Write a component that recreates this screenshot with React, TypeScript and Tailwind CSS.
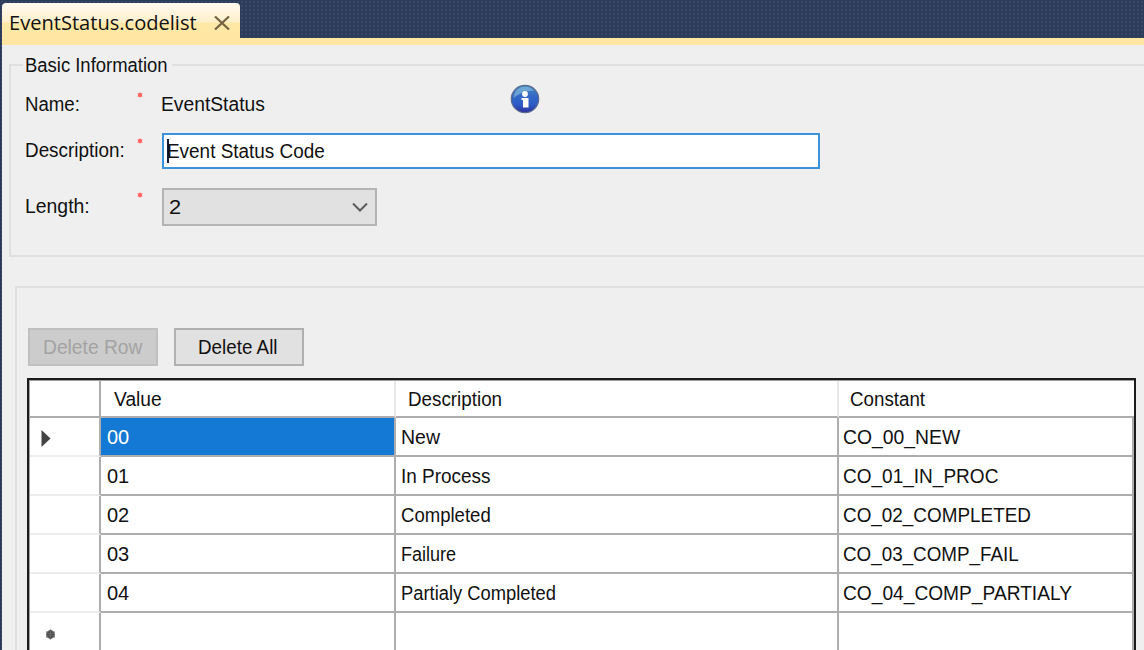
import { useLayoutEffect, useRef, useState } from "react";

type FitProps = { children: string; w: number; className?: string };

/* Single-line text condensed horizontally to a given advance width. */
function Fit({ children, w, className = "" }: FitProps) {
  const ref = useRef<HTMLSpanElement>(null);
  const [scale, setScale] = useState(1);
  useLayoutEffect(() => {
    if (ref.current) setScale(w / ref.current.offsetWidth);
  }, [w, children]);
  return (
    <span className={`block h-6 shrink-0 ${className}`} style={{ width: w }}>
      <span
        ref={ref}
        className="block w-max origin-left whitespace-nowrap leading-6"
        style={{ transform: `scaleX(${scale})` }}
      >
        {children}
      </span>
    </span>
  );
}

function Required() {
  return (
    <svg viewBox="0 0 6 6" className="h-1.5 w-1.5" fill="#ff4a4a">
      <circle cx="3" cy="3" r="2.1" />
      <path d="M3 0.300v5.400M0.500 1.500l5 3M0.500 4.500l5-3" stroke="#ff6b6b" strokeWidth="0.8" />
    </svg>
  );
}

function InfoIcon() {
  return (
    <svg viewBox="0 0 30 30" className="h-[30px] w-[30px]">
      <defs>
        <linearGradient id="ball" x1="0" y1="0" x2="0" y2="1">
          <stop offset="0" stopColor="#4b8fc4" />
          <stop offset="0.4" stopColor="#3467c6" />
          <stop offset="0.7" stopColor="#2d5cc6" />
          <stop offset="1" stopColor="#2b2f9a" />
        </linearGradient>
      </defs>
      <circle cx="15" cy="15" r="13.7" fill="url(#ball)" stroke="#5c6c8e" strokeWidth="1.2" />
      <path d="M3.500 14C4 7 9 2.800 15 2.800c4 0 7 1.500 9 4.200C17 6 10 9 3.500 14z" fill="#8bbfdc" opacity="0.6" />
      <circle cx="15" cy="10" r="2.900" fill="#fff" />
      <path d="M11.500 14h7v9.500h-5.500v-7.500h-1.500z" fill="#fff" />
    </svg>
  );
}

const rows = [
  { value: "00", desc: "New", dw: 39, constant: "CO_00_NEW", cw: 117 },
  { value: "01", desc: "In Process", dw: 89, constant: "CO_01_IN_PROC", cw: 155 },
  { value: "02", desc: "Completed", dw: 90, constant: "CO_02_COMPLETED", cw: 188 },
  { value: "03", desc: "Failure", dw: 55, constant: "CO_03_COMP_FAIL", cw: 176 },
  { value: "04", desc: "Partialy Completed", dw: 155, constant: "CO_04_COMP_PARTIALY", cw: 229 },
];

const grid = "grid grid-cols-[71px_295px_443px_295px]";
const cell = "flex items-center border-r-2 border-b-2 border-[#adadad]";

export default function App() {
  return (
    <div className="flex h-[650px] w-[1144px] flex-col overflow-hidden bg-[#2b3b58] bg-[radial-gradient(#35496a_0.8px,transparent_1px)] bg-[size:4px_4px] pl-0.5 font-['Liberation_Sans',Arial,sans-serif] text-[20px] text-[#111]">
      <div className="flex h-[38px] shrink-0 items-end">
        <div className="flex h-[35px] w-[238px] items-center rounded-t-[4px] bg-[linear-gradient(#fffaf0_0,#fff0cb_19px,#ffe8a6_20px,#ffe6a3_100%)] pl-[7px] font-['Open_Sans','Noto_Sans',sans-serif] text-[20.5px]">
          <Fit w={188} className="mt-0.5">EventStatus.codelist</Fit>
          <svg viewBox="0 0 16 14" className="ml-[17px] mt-1 h-3.5 w-4" fill="none" stroke="#746340" strokeWidth="2.2">
            <path d="M1 0.500L15 13.500M15 0.500L1 13.500" />
          </svg>
        </div>
      </div>
      <div className="h-[7px] shrink-0 bg-[#ffe6a3]" />

      <main className="flex flex-1 flex-col overflow-hidden bg-[#efefef]">
        <fieldset className="ml-[7px] mt-2 h-[204px] shrink-0 border-2 border-r-0 border-[#dfdfdf]">
          <legend className="ml-3 h-6 pl-0.5 pr-1">
            <Fit w={143}>Basic Information</Fit>
          </legend>
          <div className="flex h-9 pl-3.5">
            <div className="w-[112px] pt-[15px]"><Fit w={55}>Name:</Fit></div>
            <div className="w-[24px] pt-[15px]"><Required /></div>
            <div className="w-[349px] pt-[15px]"><Fit w={104}>EventStatus</Fit></div>
            <div className="pt-[7px]"><InfoIcon /></div>
          </div>
          <div className="mt-5 flex h-9 pl-3.5">
            <div className="w-[112px] pt-[5px]"><Fit w={100}>Description:</Fit></div>
            <div className="w-[25px] pt-[5px]"><Required /></div>
            <div className="flex h-9 w-[658px] items-center border-2 border-[#3c93dc] bg-white pl-[3px]">
              <span className="h-6 w-0.5 bg-[#111a3a]" />
              <Fit w={158} className="-ml-0.5">Event Status Code</Fit>
            </div>
          </div>
          <div className="mt-[19px] flex h-[38px] pl-3.5">
            <div className="w-[112px] pt-[6px]"><Fit w={65}>Length:</Fit></div>
            <div className="w-[25px] pt-1"><Required /></div>
            <div className="flex h-[38px] w-[215px] items-center justify-between border-2 border-[#b4b4b4] bg-[#e1e1e1] pl-[5px] pr-[7px]">
              <Fit w={12}>2</Fit>
              <svg viewBox="0 0 16 10" className="h-2.5 w-4" fill="none" stroke="#5c5c5c" strokeWidth="2">
                <path d="M1 1.500L8 8.500L15 1.500" />
              </svg>
            </div>
          </div>
        </fieldset>

        <section className="ml-[13px] mt-[29px] flex-1 border-l-2 border-t-2 border-[#dfdfdf]">
          <div className="ml-[11px] mt-10 flex gap-4">
            <button className="flex h-[38px] w-[130px] items-center justify-center border-2 border-[#c0c0c0] bg-[#cccccc] pr-0.5 text-[#a3a3a3]">
              <Fit w={99}>Delete Row</Fit>
            </button>
            <button className="flex h-[38px] w-[130px] items-center justify-center border-2 border-[#b0b0b0] bg-[#e1e1e1] pr-[3px]">
              <Fit w={80}>Delete All</Fit>
            </button>
          </div>

          <div className="ml-2.5 mt-3 w-[1109px] border-2 border-[#1c1c1c] bg-white">
            <div className="border-l border-t border-[#a0a0a0]">
              <div className={`${grid} h-[37px]`}>
                <div className={cell} />
                <div className="flex items-center border-b-2 border-r-2 border-b-[#adadad] border-r-[#e8e8e8] pl-[13px]"><Fit w={48}>Value</Fit></div>
                <div className="flex items-center border-b-2 border-r-2 border-b-[#adadad] border-r-[#e8e8e8] pl-3"><Fit w={94}>Description</Fit></div>
                <div className="flex items-center border-b-2 border-b-[#adadad] pl-[11px]"><Fit w={75}>Constant</Fit></div>
              </div>
              {rows.map((r, i) => (
                <div key={r.value} className={`${grid} h-[39px]`}>
                  <div className="flex items-center border-b-2 border-r-2 border-b-[#ececec] border-r-[#adadad] pl-[11px]">
                    {i === 0 && (
                      <svg viewBox="0 0 10 17" className="mt-1 h-[17px] w-2.5" fill="#444">
                        <path d="M0.500 0L9.500 8.500L0.500 17z" />
                      </svg>
                    )}
                  </div>
                  <div className={i === 0 ? `${cell} bg-[#1379d4] pl-1.5 text-white` : `${cell} pl-1.5`}>
                    <Fit w={22}>{r.value}</Fit>
                  </div>
                  <div className={`${cell} pl-[5px]`}><Fit w={r.dw}>{r.desc}</Fit></div>
                  <div className={`${cell} pl-1`}><Fit w={r.cw}>{r.constant}</Fit></div>
                </div>
              ))}
              <div className={`${grid} h-[39px]`}>
                <div className="flex items-center border-r-2 border-[#adadad] pl-[15px]">
                  <svg viewBox="0 0 11 11" className="mt-1 h-[11px] w-[11px]" fill="#444" stroke="#666" strokeWidth="1.200">
                    <circle cx="5.500" cy="5.500" r="3.800" />
                    <path d="M5.500 0.500v10M1.200 2.800l8.600 5.400M1.200 8.200l8.600-5.400" />
                  </svg>
                </div>
                <div className={cell} />
                <div className={cell} />
                <div className={cell} />
              </div>
            </div>
          </div>
        </section>
      </main>
    </div>
  );
}
